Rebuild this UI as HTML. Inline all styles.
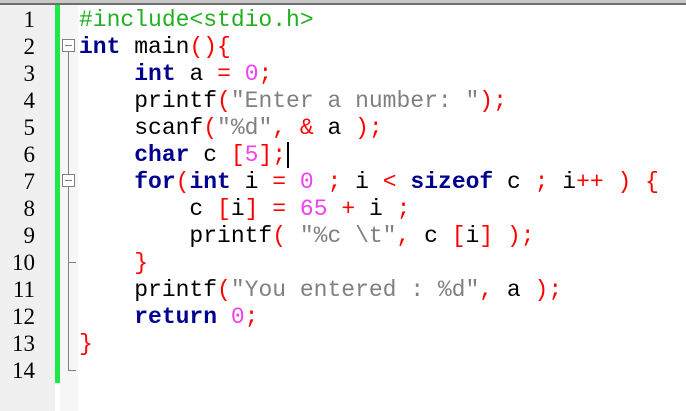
<!DOCTYPE html>
<html><head><meta charset="utf-8"><style>
html,body{margin:0;padding:0;width:686px;height:411px;overflow:hidden;background:#fff}
.g{position:absolute;left:0;top:0;width:55px;height:411px;background:#f0f0f0}
.gb{position:absolute;left:55px;top:0;width:5px;height:383px;background:#1ee84a}
.fm{position:absolute;left:60px;top:0;width:18px;height:411px;background:#f6f6f6}
.tb{position:absolute;left:0;top:0;width:686px;height:3px;background:#c8c8c8;border-bottom:2px solid #6e6e6e;z-index:5}
.ln{position:absolute;left:0;width:35px;text-align:right;font:23px "Liberation Serif",serif;color:#000;line-height:27px}
.c{position:absolute;left:79px;font:23px "Liberation Mono",monospace;line-height:27px;white-space:pre;color:#000}
b{color:#000090}
.o{color:#ff0000}.n{color:#f040f0}.s{color:#808080}.p{color:#22b022}
.vl{position:absolute;left:68px;width:1px;background:#808080}
.box{position:absolute;left:62px;width:11px;height:11px;border:1px solid #808080;background:#fff}
.box:after{content:"";position:absolute;left:2px;top:5px;width:7px;height:1px;background:#808080}
.hl{position:absolute;left:68px;width:8px;height:1px;background:#808080}
</style></head><body>
<div class="g"></div><div class="fm"></div><div class="gb"></div><div class="tb"></div>
<div class="ln" style="top:6px">1</div><div class="ln" style="top:33px">2</div><div class="ln" style="top:60px">3</div><div class="ln" style="top:87px">4</div><div class="ln" style="top:114px">5</div><div class="ln" style="top:141px">6</div><div class="ln" style="top:168px">7</div><div class="ln" style="top:195px">8</div><div class="ln" style="top:222px">9</div><div class="ln" style="top:249px">10</div><div class="ln" style="top:276px">11</div><div class="ln" style="top:303px">12</div><div class="ln" style="top:330px">13</div><div class="ln" style="top:357px">14</div>
<div class="vl" style="top:52px;height:318px"></div>
<div class="hl" style="top:262px"></div>
<div class="hl" style="top:370px"></div>
<div class="box" style="top:39px"></div>
<div class="box" style="top:174px"></div>
<div class="c" style="top:7px"><span class="p">#include&lt;stdio.h&gt;</span></div>
<div class="c" style="top:34px"><b>int</b> main<span class="o">(){</span></div>
<div class="c" style="top:61px">    <b>int</b> a <span class="o">=</span> <span class="n">0</span><span class="o">;</span></div>
<div class="c" style="top:88px">    printf<span class="o">(</span><span class="s">"Enter a number: "</span><span class="o">);</span></div>
<div class="c" style="top:115px">    scanf<span class="o">(</span><span class="s">"%d"</span><span class="o">,</span> <span class="o">&amp;</span> a <span class="o">);</span></div>
<div class="c" style="top:142px">    <b>char</b> c <span class="o">[</span><span class="n">5</span><span class="o">];</span><span style="border-left:2px solid #000;margin-left:1px"></span></div>
<div class="c" style="top:169px">    <b>for</b><span class="o">(</span><b>int</b> i <span class="o">=</span> <span class="n">0</span> <span class="o">;</span> i <span class="o">&lt;</span> <b>sizeof</b> c <span class="o">;</span> i<span class="o">++</span> <span class="o">)</span> <span class="o">{</span></div>
<div class="c" style="top:196px">        c <span class="o">[</span>i<span class="o">]</span> <span class="o">=</span> <span class="n">65</span> <span class="o">+</span> i <span class="o">;</span></div>
<div class="c" style="top:223px">        printf<span class="o">(</span> <span class="s">"%c \t"</span><span class="o">,</span> c <span class="o">[</span>i<span class="o">]</span> <span class="o">);</span></div>
<div class="c" style="top:250px">    <span class="o">}</span></div>
<div class="c" style="top:277px">    printf<span class="o">(</span><span class="s">"You entered : %d"</span><span class="o">,</span> a <span class="o">);</span></div>
<div class="c" style="top:304px">    <b>return</b> <span class="n">0</span><span class="o">;</span></div>
<div class="c" style="top:331px"><span class="o">}</span></div>
</body></html>
